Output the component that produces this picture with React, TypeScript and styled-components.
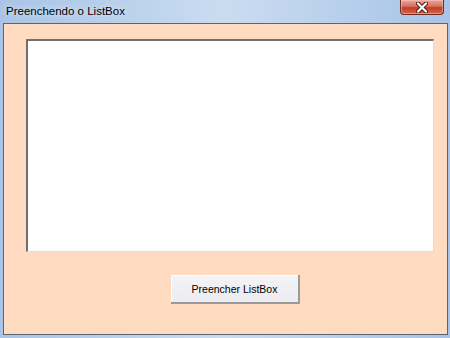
import styled, { createGlobalStyle } from 'styled-components'

const GlobalStyle = createGlobalStyle`
  html, body {
    margin: 0;
    padding: 0;
    width: 450px;
    height: 338px;
    overflow: hidden;
  }
`

export default function App() {
  return (
    <>
      <GlobalStyle />
      <Frame>
        <TitleBar>
          <Title>Preenchendo o ListBox</Title>
          <CloseButton>
            <svg width="14" height="11" viewBox="0 0 14 11">
              <path
                d="M3 1.5 L11 9.5 M11 1.5 L3 9.5"
                stroke="#4a1a12"
                strokeWidth="4"
                strokeLinecap="round"
              />
              <path
                d="M3 1.5 L11 9.5 M11 1.5 L3 9.5"
                stroke="#ffffff"
                strokeWidth="2.2"
                strokeLinecap="round"
              />
            </svg>
          </CloseButton>
        </TitleBar>
        <Client>
          <ListBox />
          <ButtonRow>
            <PushButton>Preencher ListBox</PushButton>
          </ButtonRow>
        </Client>
      </Frame>
    </>
  )
}

const Frame = styled.div`
  width: 450px;
  height: 338px;
  box-sizing: border-box;
  display: flex;
  flex-direction: column;
  padding: 0 2px 3px 3px;
  background: linear-gradient(
    90deg,
    #a9c4e6 0%,
    #b8d0ec 25%,
    #cadcf0 50%,
    #b9d0ec 75%,
    #a7c3e6 100%
  );
`

const TitleBar = styled.div`
  position: relative;
  height: 23px;
  flex: none;
  display: flex;
  align-items: center;
`

const Title = styled.div`
  font-family: 'Liberation Sans', 'DejaVu Sans', sans-serif;
  font-size: 11.5px;
  color: #000;
  padding-left: 3px;
  margin-top: -1px;
  text-shadow: 0 0 6px rgba(255, 255, 255, 0.9);
`

const CloseButton = styled.div`
  position: absolute;
  top: 0;
  right: 4px;
  width: 44px;
  height: 15px;
  box-sizing: border-box;
  display: flex;
  align-items: center;
  justify-content: center;
  border: 1px solid #6e2b20;
  border-top: none;
  border-radius: 0 0 4px 4px;
  background: linear-gradient(
    180deg,
    #e9a99b 0%,
    #d8705d 45%,
    #c13f29 55%,
    #d2634c 100%
  );
  box-shadow: inset 0 0 0 1px rgba(255, 200, 190, 0.5);
`

const Client = styled.div`
  flex: 1;
  box-sizing: border-box;
  display: flex;
  flex-direction: column;
  border: 1px solid #5d6470;
  background: #ffdcc1;
  padding: 15px 13px 0 22px;
`

const ListBox = styled.div`
  width: 408px;
  height: 213px;
  box-sizing: border-box;
  background: #fff;
  border-top: 2px solid #6f6f6f;
  border-left: 2px solid #6f6f6f;
  border-right: 1px solid #d8dde6;
  border-bottom: 1px solid #d8dde6;
`

const ButtonRow = styled.div`
  display: flex;
  padding: 23px 0 0 145px;
`

const PushButton = styled.button`
  width: 129px;
  height: 29px;
  box-sizing: border-box;
  border: none;
  border-right: 2px solid #9a9a9a;
  border-bottom: 2px solid #9a9a9a;
  box-shadow: inset 1px 1px 0 #ffffff;
  background: linear-gradient(180deg, #f4f4f8 0%, #ebebf0 100%);
  font-family: 'Liberation Sans', 'DejaVu Sans', sans-serif;
  font-size: 10.5px;
  color: #000;
  padding: 0;
`
